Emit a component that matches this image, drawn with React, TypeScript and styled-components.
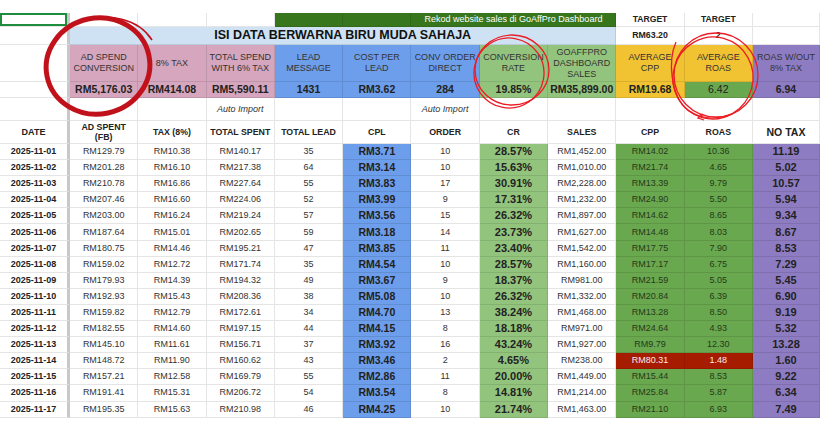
import React from 'react';
import styled, { createGlobalStyle } from 'styled-components';

const PINK = '#d5a6bd';
const BLUE = '#6d9eeb';
const LT_GREEN = '#93c47d';
const DK_GREEN = '#6aa84f';
const YELLOW = '#f1c232';
const PURPLE = '#8e7cc3';
const RED = '#a61c00';
const BANNER = '#cfe2f3';
const BAR_GREEN = '#38761d';

const GlobalStyle = createGlobalStyle`
  html, body {
    margin: 0;
    padding: 0;
    background: #fff;
    font-family: "Liberation Sans", Arial, sans-serif;
  }
`;

const Page = styled.div`
  position: relative;
  width: 820px;
  height: 432px;
  padding-top: 13px;
  box-sizing: border-box;
  overflow: hidden;
`;

const Sheet = styled.div`
  display: grid;
  grid-template-columns: 70px repeat(10, 68.3px) 1fr;
  grid-template-rows: 14px 18px 37px 16px 23px 23px repeat(17, 16.1px);
`;

interface CellProps {
  $bg?: string;
  $fg?: string;
  $weight?: number;
  $size?: number;
  $italic?: boolean;
  $span?: number;
  $frozen?: boolean;
}

const Cell = styled.div<CellProps>`
  grid-column: span ${p => p.$span ?? 1};
  box-sizing: border-box;
  display: flex;
  align-items: center;
  justify-content: center;
  text-align: center;
  background: ${p => p.$bg ?? '#fff'};
  color: ${p => p.$fg ?? '#222'};
  font-weight: ${p => p.$weight ?? 400};
  font-size: ${p => p.$size ?? 9}px;
  font-style: ${p => (p.$italic ? 'italic' : 'normal')};
  line-height: 11px;
  white-space: nowrap;
  overflow: hidden;
  border-right: ${p => (p.$frozen ? '3px solid #c8c8c8' : '1px solid rgba(0,0,0,0.1)')};
  border-bottom: 1px solid rgba(0, 0, 0, 0.1);
`;

const SelectedCell = styled(Cell)`
  box-shadow: inset 0 0 0 2px #1e8e3e;
`;

const LabelCell = styled(Cell)`
  color: #333;
  font-size: 9px;
  white-space: pre-line;
`;

const SummaryCell = styled(Cell)`
  font-size: 10.5px;
`;

const ColumnHead = styled(Cell)`
  font-weight: 700;
  white-space: pre-line;
  line-height: 10px;
`;

const Annotations = styled.svg`
  position: absolute;
  left: 0;
  top: 0;
  pointer-events: none;
`;

type Row = [string, string, string, string, string, string, string, string, string, string, string, string];

const rows: Row[] = [
  ['2025-11-01', 'RM129.79', 'RM10.38', 'RM140.17', '35', 'RM3.71', '10', '28.57%', 'RM1,452.00', 'RM14.02', '10.36', '11.19'],
  ['2025-11-02', 'RM201.28', 'RM16.10', 'RM217.38', '64', 'RM3.14', '10', '15.63%', 'RM1,010.00', 'RM21.74', '4.65', '5.02'],
  ['2025-11-03', 'RM210.78', 'RM16.86', 'RM227.64', '55', 'RM3.83', '17', '30.91%', 'RM2,228.00', 'RM13.39', '9.79', '10.57'],
  ['2025-11-04', 'RM207.46', 'RM16.60', 'RM224.06', '52', 'RM3.99', '9', '17.31%', 'RM1,232.00', 'RM24.90', '5.50', '5.94'],
  ['2025-11-05', 'RM203.00', 'RM16.24', 'RM219.24', '57', 'RM3.56', '15', '26.32%', 'RM1,897.00', 'RM14.62', '8.65', '9.34'],
  ['2025-11-06', 'RM187.64', 'RM15.01', 'RM202.65', '59', 'RM3.18', '14', '23.73%', 'RM1,627.00', 'RM14.48', '8.03', '8.67'],
  ['2025-11-07', 'RM180.75', 'RM14.46', 'RM195.21', '47', 'RM3.85', '11', '23.40%', 'RM1,542.00', 'RM17.75', '7.90', '8.53'],
  ['2025-11-08', 'RM159.02', 'RM12.72', 'RM171.74', '35', 'RM4.54', '10', '28.57%', 'RM1,160.00', 'RM17.17', '6.75', '7.29'],
  ['2025-11-09', 'RM179.93', 'RM14.39', 'RM194.32', '49', 'RM3.67', '9', '18.37%', 'RM981.00', 'RM21.59', '5.05', '5.45'],
  ['2025-11-10', 'RM192.93', 'RM15.43', 'RM208.36', '38', 'RM5.08', '10', '26.32%', 'RM1,332.00', 'RM20.84', '6.39', '6.90'],
  ['2025-11-11', 'RM159.82', 'RM12.79', 'RM172.61', '34', 'RM4.70', '13', '38.24%', 'RM1,468.00', 'RM13.28', '8.50', '9.19'],
  ['2025-11-12', 'RM182.55', 'RM14.60', 'RM197.15', '44', 'RM4.15', '8', '18.18%', 'RM971.00', 'RM24.64', '4.93', '5.32'],
  ['2025-11-13', 'RM145.10', 'RM11.61', 'RM156.71', '37', 'RM3.92', '16', '43.24%', 'RM1,927.00', 'RM9.79', '12.30', '13.28'],
  ['2025-11-14', 'RM148.72', 'RM11.90', 'RM160.62', '43', 'RM3.46', '2', '4.65%', 'RM238.00', 'RM80.31', '1.48', '1.60'],
  ['2025-11-15', 'RM157.21', 'RM12.58', 'RM169.79', '55', 'RM2.86', '11', '20.00%', 'RM1,449.00', 'RM15.44', '8.53', '9.22'],
  ['2025-11-16', 'RM191.41', 'RM15.31', 'RM206.72', '54', 'RM3.54', '8', '14.81%', 'RM1,214.00', 'RM25.84', '5.87', '6.34'],
  ['2025-11-17', 'RM195.35', 'RM15.63', 'RM210.98', '46', 'RM4.25', '10', '21.74%', 'RM1,463.00', 'RM21.10', '6.93', '7.49'],
];

const labels: [string, string][] = [
  ['AD SPEND\nCONVERSION', PINK],
  ['8% TAX', PINK],
  ['TOTAL SPEND\nWITH 6% TAX', PINK],
  ['LEAD\nMESSAGE', BLUE],
  ['COST PER\nLEAD', BLUE],
  ['CONV ORDER\nDIRECT', BLUE],
  ['CONVERSION\nRATE', LT_GREEN],
  ['GOAFFPRO\nDASHBOARD\nSALES', LT_GREEN],
  ['AVERAGE\nCPP', YELLOW],
  ['AVERAGE\nROAS', YELLOW],
  ['ROAS W/OUT\n8% TAX', PURPLE],
];

const summary: [string, string, number][] = [
  ['RM5,176.03', PINK, 700],
  ['RM414.08', PINK, 700],
  ['RM5,590.11', PINK, 700],
  ['1431', BLUE, 700],
  ['RM3.62', BLUE, 700],
  ['284', BLUE, 700],
  ['19.85%', LT_GREEN, 700],
  ['RM35,899.00', LT_GREEN, 700],
  ['RM19.68', YELLOW, 700],
  ['6.42', DK_GREEN, 400],
  ['6.94', PURPLE, 700],
];

const heads = ['AD SPENT\n(FB)', 'TAX (8%)', 'TOTAL SPENT', 'TOTAL LEAD', 'CPL', 'ORDER', 'CR', 'SALES', 'CPP', 'ROAS'];

function DataRow({ row }: { row: Row }) {
  const [date, spent, tax, total, lead, cpl, order, cr, sales, cpp, roas, noTax] = row;
  const bad = Number(roas) < 2;
  const perfBg = bad ? RED : DK_GREEN;
  const perfFg = bad ? '#fbe9e7' : '#243a1a';
  return (
    <>
      <Cell $frozen $weight={700}>{date}</Cell>
      <Cell $fg='#333'>{spent}</Cell>
      <Cell $fg='#333'>{tax}</Cell>
      <Cell $fg='#333'>{total}</Cell>
      <Cell $fg='#333'>{lead}</Cell>
      <Cell $bg={BLUE} $weight={700} $size={10.5}>{cpl}</Cell>
      <Cell $fg='#333'>{order}</Cell>
      <Cell $bg={LT_GREEN} $weight={700} $size={11}>{cr}</Cell>
      <Cell $fg='#333'>{sales}</Cell>
      <Cell $bg={perfBg} $fg={perfFg}>{cpp}</Cell>
      <Cell $bg={perfBg} $fg={perfFg}>{roas}</Cell>
      <Cell $bg={PURPLE} $weight={700} $size={11}>{noTax}</Cell>
    </>
  );
}

export default function App() {
  return (
    <>
      <GlobalStyle />
      <Page>
        <Sheet>
          {/* row 1 */}
          <SelectedCell $frozen />
          <Cell />
          <Cell />
          <Cell />
          <Cell $bg={BAR_GREEN} />
          <Cell $bg={BAR_GREEN} />
          <Cell $span={3} $bg={BAR_GREEN} $fg='#fff'>Rekod website sales di GoAffPro Dashboard</Cell>
          <Cell $weight={700} $size={8.6}>TARGET</Cell>
          <Cell $weight={700} $size={8.6}>TARGET</Cell>
          <Cell />

          {/* row 2 */}
          <Cell $frozen />
          <Cell $span={8} $bg={BANNER} $weight={700} $size={12.5} $fg='#111'>ISI DATA BERWARNA BIRU MUDA SAHAJA</Cell>
          <Cell $weight={700} $size={8.8}>RM63.20</Cell>
          <Cell $weight={700} $size={8.8}>2</Cell>
          <Cell />

          {/* row 3: labels */}
          <Cell $frozen />
          {labels.map(([text, bg]) => (
            <LabelCell key={text} $bg={bg}>{text}</LabelCell>
          ))}

          {/* row 4: totals */}
          <Cell $frozen />
          {summary.map(([text, bg, weight]) => (
            <SummaryCell key={text} $bg={bg} $weight={weight}>{text}</SummaryCell>
          ))}

          {/* row 5 */}
          <Cell $frozen />
          <Cell />
          <Cell />
          <Cell $italic $fg='#333'>Auto Import</Cell>
          <Cell />
          <Cell />
          <Cell $italic $fg='#333'>Auto Import</Cell>
          <Cell />
          <Cell />
          <Cell />
          <Cell />
          <Cell />

          {/* row 6: column heads */}
          <ColumnHead $frozen $size={9}>DATE</ColumnHead>
          {heads.map(h => (
            <ColumnHead key={h} $size={8.8}>{h}</ColumnHead>
          ))}
          <ColumnHead $size={10.5}>NO TAX</ColumnHead>

          {rows.map(r => (
            <DataRow key={r[0]} row={r} />
          ))}
        </Sheet>

        <Annotations width={820} height={432} viewBox='0 0 820 432'>
          <ellipse cx={98} cy={66} rx={52} ry={48} transform='rotate(-12 98 66)' fill='none' stroke='#c1121c' strokeWidth={5} />
          <path d='M84 21 C108 13 138 18 152 40' fill='none' stroke='#c1121c' strokeWidth={1.6} />

          <ellipse cx={512} cy={70} rx={37} ry={35} fill='none' stroke='#ec1c24' strokeWidth={1.3} />
          <ellipse cx={509} cy={73} rx={35} ry={35} transform='rotate(10 509 73)' fill='none' stroke='#ec1c24' strokeWidth={1.3} />

          <ellipse cx={716} cy={75} rx={42} ry={42} fill='none' stroke='#ec1c24' strokeWidth={1.3} />
          <ellipse cx={713} cy={78} rx={40} ry={41} transform='rotate(15 713 78)' fill='none' stroke='#ec1c24' strokeWidth={1.3} />
          <path d='M676 42 C668 60 670 96 688 110 C700 119 712 120 726 116' fill='none' stroke='#ec1c24' strokeWidth={1.3} />
          <path d='M703 114 L698 118 L704 120' fill='none' stroke='#ec1c24' strokeWidth={1.3} />
        </Annotations>
      </Page>
    </>
  );
}
